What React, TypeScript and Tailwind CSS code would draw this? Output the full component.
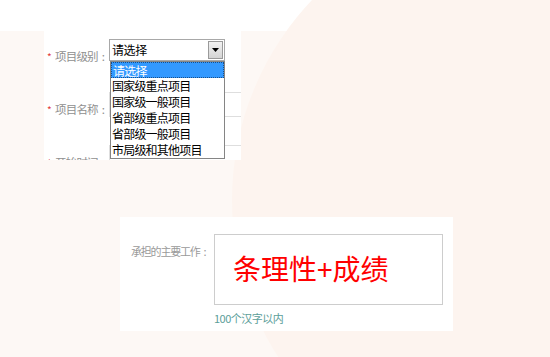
const OPTIONS = ["请选择", "国家级重点项目", "国家级一般项目", "省部级重点项目", "省部级一般项目", "市局级和其他项目"];

const cjk = { fontFamily: '"Noto Sans CJK SC", "Liberation Sans", sans-serif' };

function Backdrop() {
  return (
    <svg className="absolute inset-0" width="550" height="357" viewBox="0 0 550 357">
      <rect width="550" height="357" fill="#fdf8f5" />
      <path d="M0 0 H550 V31 H0 Z" fill="#ffffff" />
      <circle cx="522" cy="200" r="290" fill="#fdf4ef" />
    </svg>
  );
}

function Label({ text }: { text: string }) {
  return (
    <div className="flex w-[62px] shrink-0 items-center pt-[11px] text-[11.5px] leading-[13px] tracking-[-0.8px] text-[#8f8f8f]">
      <span className="w-[8px] text-[10px] text-[#e23b3b]">*</span>
      <span>{text}</span>
      <span className="ml-[4px]">:</span>
    </div>
  );
}

function FakeSelect() {
  return (
    <div className="relative flex h-[22px] w-[116px] items-stretch border border-[#a8a8a8] bg-white">
      <div className="flex-1 pl-[2px] text-[12px] leading-[20px] tracking-[-0.4px] text-black">请选择</div>
      <div className="m-px flex w-[15px] items-center justify-center border border-[#9a9a9a] bg-gradient-to-b from-[#f2f2f2] to-[#d4d4d4]">
        <svg width="7" height="4" viewBox="0 0 7 4">
          <path d="M0 0 H7 L3.5 4 Z" fill="#000" />
        </svg>
      </div>
    </div>
  );
}

function DropList() {
  return (
    <div className="absolute left-[66px] top-[30px] w-[115px] border border-[#858585] bg-white">
      {OPTIONS.map((o, i) => (
        <div
          key={o}
          className={`h-[16px] pl-[1px] text-[12px] leading-[16px] tracking-[-0.8px] ${
            i === 0 ? "border border-dotted border-[#1a4f8a] bg-[#3399ff] leading-[14px] text-white" : "text-black"
          }`}
        >
          {o}
        </div>
      ))}
    </div>
  );
}

export default function App() {
  return (
    <div className="relative h-[357px] w-[550px] overflow-hidden" style={cjk}>
      <Backdrop />
      <div className="relative flex flex-col">
        {/* top form snippet */}
        <div className="relative ml-[44px] mt-[31px] h-[129px] w-[197px] overflow-hidden bg-white">
          <div className="flex flex-col pl-[3px] pt-[8px]">
            <div className="flex h-[53px] items-start">
              <Label text="项目级别" />
              <FakeSelect />
            </div>
            <div className="flex h-[53px] items-start">
              <Label text="项目名称" />
              <div className="h-[25px] w-[200px] shrink-0 border border-[#dedede] bg-white" />
            </div>
            <div className="flex h-[53px] items-start">
              <Label text="开始时间" />
              <div className="h-[25px] w-[200px] shrink-0 border border-[#dedede] bg-white" />
            </div>
          </div>
          <DropList />
        </div>

        {/* bottom form snippet */}
        <div className="ml-[120px] mt-[57px] flex h-[114px] w-[333px] bg-white pl-[11px] pt-[17px]">
          <div className="flex w-[83px] shrink-0 pt-[11px] text-[11px] leading-[12px] tracking-[-1.2px] text-[#9a9a9a]">
            <span>承担的主要工作</span>
            <span className="ml-[4px]">:</span>
          </div>
          <div className="flex flex-col">
            <div className="h-[71px] w-[229px] border border-[#cdcdcd] bg-white pl-[18px] pt-[17px] text-[28px] leading-[32px] text-[#ff0000]">
              条理性+成绩
            </div>
            <div className="pt-[7px] text-[11px] leading-[13px] tracking-[-0.5px] text-[#5c9e99]">100个汉字以内</div>
          </div>
        </div>
      </div>
    </div>
  );
}
